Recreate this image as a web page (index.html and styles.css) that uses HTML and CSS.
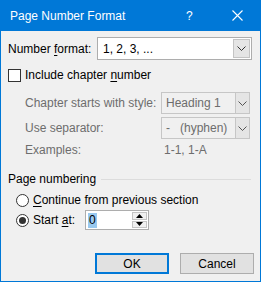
FILE: index.html
```html
<!DOCTYPE html>
<html lang="en">

<head>
    <meta charset="UTF-8">
    <title>Page Number Format</title>
    <link rel="stylesheet" href="styles.css">
</head>

<body>
    <div class="dialog">
        <div class="titlebar">
            <span class="title">Page Number Format</span>
            <span class="help">?</span>
            <span class="close">
                <svg width="11" height="11" viewBox="0 0 11 11">
                    <path d="M0.5 0.5 L10.5 10.5 M10.5 0.5 L0.5 10.5" stroke="#fff" stroke-width="1.1" fill="none"/>
                </svg>
            </span>
        </div>

        <div class="content">
            <div class="row format-row">
                <span class="label">Number <u>f</u>ormat:</span>
                <div class="combo main-combo">
                    <span class="combo-text">1, 2, 3, ...</span>
                    <span class="combo-btn">
                        <svg width="9" height="5" viewBox="0 0 9 5">
                            <path d="M0.5 0.5 L4.5 4.5 L8.5 0.5" stroke="#333" fill="none"/>
                        </svg>
                    </span>
                </div>
            </div>

            <div class="row check-row">
                <span class="checkbox"></span>
                <span class="label">Include chapter <u>n</u>umber</span>
            </div>

            <div class="row sub-row chapter-row">
                <span class="label disabled">Chapter starts with style:</span>
                <div class="combo sub-combo">
                    <span class="combo-text">Heading 1</span>
                    <span class="combo-btn">
                        <svg width="9" height="5" viewBox="0 0 9 5">
                            <path d="M0.5 0.5 L4.5 4.5 L8.5 0.5" stroke="#555" fill="none"/>
                        </svg>
                    </span>
                </div>
            </div>

            <div class="row sub-row sep-row">
                <span class="label disabled">Use separator:</span>
                <div class="combo sub-combo">
                    <span class="combo-text">-&nbsp;&nbsp;&nbsp;(hyphen)</span>
                    <span class="combo-btn">
                        <svg width="9" height="5" viewBox="0 0 9 5">
                            <path d="M0.5 0.5 L4.5 4.5 L8.5 0.5" stroke="#555" fill="none"/>
                        </svg>
                    </span>
                </div>
            </div>

            <div class="row sub-row examples-row">
                <span class="label disabled">Examples:</span>
                <span class="examples disabled">1-1, 1-A</span>
            </div>

            <div class="row group-row">
                <span class="label">Page numbering</span>
                <span class="group-line"></span>
            </div>

            <div class="row radio-row first-radio">
                <span class="radio"></span>
                <span class="label"><u>C</u>ontinue from previous section</span>
            </div>

            <div class="row radio-row second-radio">
                <span class="radio checked"></span>
                <span class="label start-label">Start <u>a</u>t:</span>
                <div class="spinner">
                    <span class="spin-text"><span class="selected">0</span></span>
                    <span class="spin-btns">
                        <span class="spin-btn">
                            <svg width="7" height="4" viewBox="0 0 7 4"><path d="M0 4 L3.5 0 L7 4 Z" fill="#000"/></svg>
                        </span>
                        <span class="spin-btn">
                            <svg width="7" height="4" viewBox="0 0 7 4"><path d="M0 0 L3.5 4 L7 0 Z" fill="#000"/></svg>
                        </span>
                    </span>
                </div>
            </div>

            <div class="buttons">
                <button class="btn default">OK</button>
                <button class="btn">Cancel</button>
            </div>
        </div>
    </div>
</body>

</html>
```

FILE: styles.css
```css
* {
    margin: 0;
    padding: 0;
    box-sizing: border-box;
}

body {
    background: #f0f0f0;
    font-family: "Liberation Sans", Arial, sans-serif;
    font-size: 12px;
    color: #000;
}

.dialog {
    width: 261px;
    height: 282px;
    border: 1px solid #0078d7;
    border-top: none;
    background: #f0f0f0;
}

.titlebar {
    height: 31px;
    background: #0078d7;
    color: #fff;
    display: flex;
    align-items: center;
    padding-left: 9px;
    margin: 0 -1px;
}

.title {
    flex-grow: 1;
    font-size: 12px;
    padding-left: 1px;
}

.help {
    font-size: 12px;
    width: 13px;
    margin-right: 33px;
}

.close {
    display: flex;
    margin-right: 18px;
}

.content {
    padding-left: 7px;
}

.row {
    display: flex;
    align-items: center;
}

.label {
    white-space: nowrap;
}

.disabled {
    color: #6d6d6d;
}

u {
    text-decoration-thickness: 1px;
    text-underline-offset: 2px;
}

.format-row {
    margin-top: 6px;
    height: 23px;
}

.format-row .label {
    width: 89px;
}

.combo {
    display: flex;
    border: 1px solid #adadad;
    background: #fff;
}

.combo-text {
    flex-grow: 1;
    padding-left: 5px;
    display: flex;
    align-items: center;
}

.combo-btn {
    width: 17px;
    display: flex;
    align-items: center;
    justify-content: center;
    background: #e5e5e5;
    border-left: 1px solid #c4c4c4;
}

.main-combo {
    width: 155px;
    height: 23px;
}

.main-combo .combo-btn {
    margin: 1px;
    border: 1px solid #c4c4c4;
}

.check-row {
    margin-top: 7px;
    height: 16px;
}

.checkbox {
    width: 13px;
    height: 13px;
    border: 1px solid #333;
    background: #fff;
    margin-right: 4px;
}

.sub-row {
    padding-left: 17px;
}

.sub-row .label {
    width: 136px;
}

.chapter-row {
    margin-top: 9px;
    height: 22px;
}

.sep-row {
    margin-top: 3px;
    height: 22px;
}

.sub-combo {
    width: 89px;
    height: 22px;
    background: #f0f0f0;
    border-color: #c6c6c6;
    color: #6d6d6d;
}

.sub-combo .combo-text {
    padding-left: 4px;
}

.sub-combo .combo-btn {
    width: 14px;
    background: #e5e5e5;
    border-left: 1px solid #c6c6c6;
}

.examples-row {
    margin-top: 3px;
    height: 16px;
}

.examples {
    padding-left: 3px;
}

.group-row {
    margin-top: 13px;
    height: 16px;
}

.group-line {
    flex-grow: 1;
    height: 1px;
    background: #dcdcdc;
    margin: 0 9px 0 5px;
}

.radio-row {
    padding-left: 8px;
}

.first-radio {
    margin-top: 5px;
    height: 16px;
}

.second-radio {
    margin-top: 2px;
    height: 20px;
}

.radio {
    width: 13px;
    height: 13px;
    border: 1px solid #333;
    border-radius: 50%;
    background: #fff;
    margin-right: 4px;
    display: flex;
    align-items: center;
    justify-content: center;
}

.radio.checked::after {
    content: "";
    width: 7px;
    height: 7px;
    border-radius: 50%;
    background: #333;
}

.start-label {
    width: 52px;
}

.spinner {
    display: flex;
    width: 64px;
    height: 20px;
    border: 1px solid #adadad;
    background: #fff;
}

.spin-text {
    flex-grow: 1;
    display: flex;
    align-items: center;
    padding-left: 2px;
}

.selected {
    background: #99c9ef;
    color: #000;
    padding: 0 1px;
    line-height: 15px;
}

.spin-btns {
    width: 16px;
    display: flex;
    flex-direction: column;
    padding: 1px 1px 1px 0;
    gap: 1px;
}

.spin-btn {
    flex-grow: 1;
    display: flex;
    align-items: center;
    justify-content: center;
    background: #f0f0f0;
    border: 1px solid #c4c4c4;
}

.buttons {
    display: flex;
    justify-content: flex-end;
    gap: 11px;
    margin-top: 23px;
    padding-right: 6px;
}

.btn {
    width: 74px;
    height: 21px;
    font-family: inherit;
    font-size: 12px;
    background: #e1e1e1;
    border: 1px solid #adadad;
    color: #000;
}

.btn.default {
    border: 2px solid #0078d7;
}
```
